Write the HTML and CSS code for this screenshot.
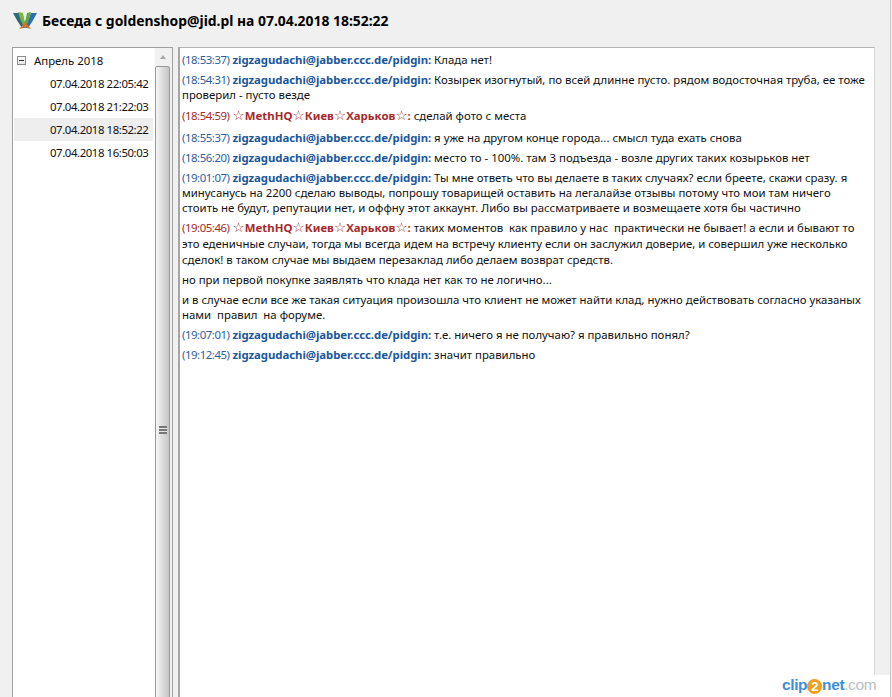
FILE: index.html
```html
<!DOCTYPE html>
<html lang="ru">
<head>
<meta charset="utf-8">
<title>Беседа</title>
<link rel="stylesheet" href="styles.css">
</head>
<body>
<div class="window">
  <header class="title">
    <svg class="logo" width="24" height="18" viewBox="0 0 24 18">
      <path d="M0 1 L6 1 Q9 8 12 16 L9 16 Q4 9 0 1 Z" fill="#2b6a78"/>
      <path d="M5 0 L10 1 Q11 7 13 14 L11 15 Q7 8 5 0 Z" fill="#7cb53c"/>
      <path d="M24 1 L18 1 Q15 8 12 16 L15 16 Q20 9 24 1 Z" fill="#2f6db0"/>
      <path d="M18 0 L14 1 Q13 7 11 13 L13 15 Q16 8 18 0 Z" fill="#5fa84a"/>
      <path d="M6 17 Q10 13 12 10 Q15 13 18 17 L14 16 L12 14 L10 16 Z" fill="#d8702a"/>
    </svg>
    <h1>Беседа с goldenshop@jid.pl на 07.04.2018 18:52:22</h1>
  </header>
  <main class="panes">
    <aside class="tree">
      <div class="tree-list">
        <div class="tree-root"><span class="expander"></span>Апрель 2018</div>
        <div class="tree-item">07.04.2018 22:05:42</div>
        <div class="tree-item">07.04.2018 21:22:03</div>
        <div class="tree-item selected">07.04.2018 18:52:22</div>
        <div class="tree-item">07.04.2018 16:50:03</div>
      </div>
      <div class="scrollbar">
        <div class="arrow"></div>
        <div class="thumb"><span class="grip"></span></div>
      </div>
    </aside>
    <section class="log">
      <p class="msg"><span class="time">(18:53:37)</span> <b class="me">zigzagudachi@jabber.ccc.de/pidgin:</b> Клада нет!</p>
      <p class="msg"><span class="time">(18:54:31)</span> <b class="me">zigzagudachi@jabber.ccc.de/pidgin:</b> Козырек изогнутый, по всей длинне пусто. рядом водосточная труба, ее тоже<br>проверил - пусто везде</p>
      <p class="msg star"><span class="time them">(18:54:59)</span> <b class="them"><span class="st">☆</span>MethHQ<span class="st">☆</span>Киев<span class="st">☆</span>Харьков<span class="st">☆</span>:</b> сделай фото с места</p>
      <p class="msg"><span class="time">(18:55:37)</span> <b class="me">zigzagudachi@jabber.ccc.de/pidgin:</b> я уже на другом конце города... смысл туда ехать снова</p>
      <p class="msg"><span class="time">(18:56:20)</span> <b class="me">zigzagudachi@jabber.ccc.de/pidgin:</b> место то - 100%. там 3 подъезда - возле других таких козырьков нет</p>
      <p class="msg"><span class="time">(19:01:07)</span> <b class="me">zigzagudachi@jabber.ccc.de/pidgin:</b> Ты мне ответь что вы делаете в таких случаях? если бреете, скажи сразу. я<br>минусанусь на 2200 сделаю выводы, попрошу товарищей оставить на легалайзе отзывы потому что мои там ничего<br>стоить не будут, репутации нет, и оффну этот аккаунт. Либо вы рассматриваете и возмещаете хотя бы частично</p>
      <p class="msg tall"><span class="time them">(19:05:46)</span> <b class="them"><span class="st">☆</span>MethHQ<span class="st">☆</span>Киев<span class="st">☆</span>Харьков<span class="st">☆</span>:</b> таких моментов&nbsp; как правило у нас&nbsp; практически не бывает! а если и бывают то<br>это еденичные случаи, тогда мы всегда идем на встречу клиенту если он заслужил доверие, и совершил уже несколько<br>сделок! в таком случае мы выдаем перезаклад либо делаем возврат средств.</p>
      <p class="msg">но при первой покупке заявлять что клада нет как то не логично...</p>
      <p class="msg">и в случае если все же такая ситуация произошла что клиент не может найти клад, нужно действовать согласно указаных<br>нами&nbsp; правил&nbsp; на форуме.</p>
      <p class="msg"><span class="time">(19:07:01)</span> <b class="me">zigzagudachi@jabber.ccc.de/pidgin:</b> т.е. ничего я не получаю? я правильно понял?</p>
      <p class="msg"><span class="time">(19:12:45)</span> <b class="me">zigzagudachi@jabber.ccc.de/pidgin:</b> значит правильно</p>
    </section>
  </main>
  <div class="watermark"><span class="wm-blue">clip<span class="wm-two">2</span>net</span><span class="wm-grey">.com</span></div>
</div>
</body>
</html>
```
FILE: styles.css
```css
* { box-sizing: border-box; }
html, body { margin: 0; height: 100%; overflow: hidden; }
body { background: #f0f0f0; font-family: "Noto Sans", "DejaVu Sans", sans-serif; font-size: 11.4px; color: #111; }
.window { position: relative; width: 891px; height: 697px; display: flex; flex-direction: column; padding: 0 15px 0 12px; border-right: 1px solid #c8c8c8; }
.title { height: 47px; display: flex; align-items: center; gap: 5px; padding: 0 0 5px 1px; flex: none; }
.logo { flex: none; }
.title h1 { margin: 0; font-size: 13.9px; font-weight: 700; color: #000; line-height: 16px; white-space: nowrap; }
.panes { flex: 1; display: flex; gap: 5px; min-height: 0; }
.tree { width: 161px; flex: none; display: flex; border: 1px solid #a0a0a0; border-bottom: 0; background: #fff; overflow: hidden; }
.tree-list { flex: 1; padding-top: 4px; min-width: 0; white-space: nowrap; }
.tree-root { height: 18px; line-height: 17px; padding-left: 21px; position: relative; margin-bottom: 2px; }
.expander { position: absolute; left: 4px; top: 4px; width: 9px; height: 9px; border: 1px solid #8c8c8c; background: linear-gradient(#fff, #e6e6e6); }
.expander::after { content: ""; position: absolute; left: 1px; top: 3px; width: 5px; height: 1px; background: #333; }
.tree-item { height: 23px; line-height: 23px; padding-left: 36px; margin-left: 1px; width: 139px; letter-spacing: -0.42px; }
.tree-item.selected { background: #eeeeee; }
.scrollbar { width: 17px; flex: none; background: #f1f1f1; padding-right: 2px; }
.arrow { height: 18px; position: relative; }
.arrow::after { content: ""; position: absolute; left: 5px; top: 7px; border: 3px solid transparent; border-top: 0; border-bottom: 4px solid #a6a6a6; }
.thumb { height: 728px; border: 1px solid #979797; border-radius: 2px; background: linear-gradient(90deg, #f6f6f6, #dedede 45%, #c6c6c6); display: flex; align-items: center; justify-content: center; }
.grip { width: 8px; height: 8px; background: repeating-linear-gradient(#777 0 2px, #e8e8e8 2px 3px); }
.log { flex: 1; background: #fff; border: 1px solid #b4b4b4; border-bottom: 0; border-right-color: #dadada; border-left: 2px solid #a6a6a6; padding: 4px 0 0 2px; min-width: 0; overflow: hidden; }
.msg { margin: 0 0 5px; line-height: 15px; white-space: nowrap; }
.msg.star { line-height: 17px; margin-bottom: 6px; }
.msg.tall { line-height: 16px; margin-bottom: 4px; }
.time { color: #2e5e9e; letter-spacing: -0.45px; }
.me { color: #20579b; font-weight: 700; letter-spacing: -0.06px; }
.them { color: #a52a2a; }
b.them { font-weight: 700; letter-spacing: 0.05px; }
.st { font-family: "DejaVu Sans", sans-serif; font-size: 13.5px; font-weight: 700; line-height: 10px; }
.watermark { position: absolute; right: 0; bottom: 0; height: 22px; width: 116px; padding: 1px 0 0 8px; background: #fff; font-family: "Liberation Sans", sans-serif; font-size: 15.5px; font-weight: 700; line-height: 18px; letter-spacing: -0.4px; white-space: nowrap; }
.wm-blue { color: #3d8fd6; }
.wm-two { display: inline-block; width: 15px; height: 15px; line-height: 15px; text-align: center; font-size: 13px; color: #fff; background: #f0a020; border-radius: 50%; vertical-align: -1px; }
.wm-grey { color: #b9bec4; font-weight: 400; }
```
